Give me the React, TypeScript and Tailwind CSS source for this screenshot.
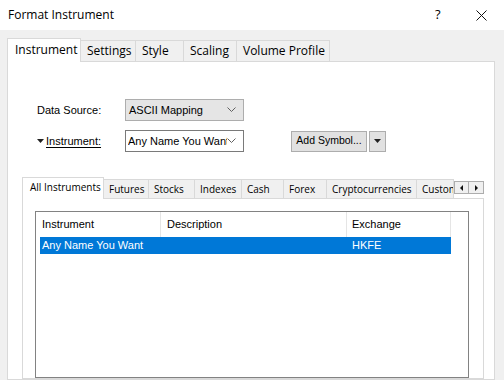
const ui = "font-['Open_Sans',sans-serif]";
const ms = "font-['Liberation_Sans',Arial,sans-serif]";

const Chevron = () => (
  <svg width="9" height="6" viewBox="0 0 9 6" className="shrink-0">
    <polyline points="0.5,0.5 4.5,4.5 8.5,0.5" fill="none" stroke="#606060" strokeWidth="1" />
  </svg>
);

const outerTabs = [
  { label: "Settings", w: "w-[55px]" },
  { label: "Style", w: "w-[48px]" },
  { label: "Scaling", w: "w-[53px]" },
  { label: "Volume Profile", w: "w-[93px]" },
];

const innerTabs = [
  { label: "Futures", w: "w-[45px]" },
  { label: "Stocks", w: "w-[46px]" },
  { label: "Indexes", w: "w-[47px]" },
  { label: "Cash", w: "w-[42px]" },
  { label: "Forex", w: "w-[43px]" },
  { label: "Cryptocurrencies", w: "w-[90px]" },
  { label: "Custom", w: "w-[37px]" },
];

export default function App() {
  return (
    <div className="flex h-[380px] w-[504px] flex-col overflow-hidden bg-[#f0f0f0] text-black">
      {/* title bar */}
      <div className={`flex h-[30px] shrink-0 items-center bg-white pl-[8px] text-[12px] ${ui}`}>
        <span className="flex-1">Format Instrument</span>
        <span className="w-[14px] text-[13px]">?</span>
        <span className="ml-[27px] mr-[17px] flex h-[11px] w-[11px] items-center">
          <svg width="11" height="11" viewBox="0 0 11 11">
            <path d="M0.5 0.5 L10.5 10.5 M10.5 0.5 L0.5 10.5" stroke="#111" strokeWidth="1" />
          </svg>
        </span>
      </div>

      <div className="flex min-h-0 flex-1 flex-col pl-[7px] pr-[9px] pt-[8px]">
        {/* outer tabs */}
        <div className={`relative z-10 flex h-[23px] shrink-0 items-end text-[12px] ${ui}`}>
          <div className="-mb-px flex h-[24px] w-[74px] items-center border border-b-0 border-[#d9d9d9] bg-white pl-[7px] pb-[2px]">
            Instrument
          </div>
          {outerTabs.map((t) => (
            <div
              key={t.label}
              className={`flex h-[21px] ${t.w} items-center border-t border-r border-[#d9d9d9] bg-[#f0f0f0] pl-[6px]`}
            >
              {t.label}
            </div>
          ))}
        </div>

        {/* outer panel */}
        <div className="flex min-h-0 flex-1 flex-col border border-[#d9d9d9] bg-white pt-[37px]">
          <div className={`flex h-[22px] items-center pl-[29px] text-[11px] ${ms}`}>
            <span className="w-[88px]">Data Source:</span>
            <div className="flex h-[22px] w-[119px] items-center justify-between border border-[#adadad] bg-[#e5e5e5] pl-[3px] pr-[7px]">
              <span>ASCII Mapping</span>
              <Chevron />
            </div>
          </div>

          <div className={`mt-[9px] flex h-[22px] items-center pl-[29px] text-[11px] ${ms}`}>
            <span className="flex w-[88px] items-center">
              <svg width="7" height="4" viewBox="0 0 7 4" className="mr-[2px]">
                <polygon points="0,0 7,0 3.5,4" fill="#222" />
              </svg>
              <span className="underline underline-offset-2">Instrument:</span>
            </span>
            <div className="flex h-[22px] w-[119px] items-center border border-[#7a7a7a] bg-white pl-[2px] pr-[7px]">
              <span className="w-[99px] overflow-hidden whitespace-nowrap">Any Name You Want</span>
              <span className="ml-auto">
                <Chevron />
              </span>
            </div>
            <div className="ml-[47px] flex h-[21px] w-[76px] items-center justify-center border border-[#adadad] bg-[#e1e1e1] text-[10.5px]">
              Add Symbol...
            </div>
            <div className="ml-[2px] flex h-[21px] w-[17px] items-center justify-center border border-[#adadad] bg-[#e1e1e1]">
              <svg width="7" height="4" viewBox="0 0 7 4">
                <polygon points="0,0 7,0 3.5,4" fill="#222" />
              </svg>
            </div>
          </div>

          {/* inner tab control */}
          <div className="ml-[14px] mr-[10px] mt-[26px] flex min-h-0 flex-1 flex-col">
            <div className={`relative z-10 flex h-[20px] shrink-0 items-end text-[10px] ${ui}`}>
              <div className="-mb-px flex h-[22px] w-[83px] items-center border border-b-0 border-[#d9d9d9] bg-white pl-[7px] pb-[2px]">
                All Instruments
              </div>
              {innerTabs.map((t) => (
                <div
                  key={t.label}
                  className={`flex h-[19px] ${t.w} shrink-0 items-center overflow-hidden whitespace-nowrap border-t border-r border-[#d9d9d9] bg-[#f0f0f0] pl-[5px]`}
                >
                  {t.label}
                </div>
              ))}
              <div className="mb-[4px] flex">
                <div className="flex h-[13px] w-[15px] items-center justify-center border border-[#adadad] bg-[#f0f0f0]">
                  <svg width="3" height="6" viewBox="0 0 3 6">
                    <polygon points="3,0 3,6 0,3" fill="#111" />
                  </svg>
                </div>
                <div className="flex h-[13px] w-[15px] items-center justify-center border border-l-0 border-[#adadad] bg-[#f0f0f0]">
                  <svg width="3" height="6" viewBox="0 0 3 6">
                    <polygon points="0,0 0,6 3,3" fill="#111" />
                  </svg>
                </div>
              </div>
            </div>

            <div className="flex min-h-0 flex-1 flex-col border border-[#d9d9d9] bg-white pl-[12px] pr-[14px] pt-[12px]">
              <div className={`flex flex-1 flex-col border border-[#828282] bg-white text-[11px] ${ms}`}>
                <div className="flex h-[25px] items-center">
                  <div className="flex h-full w-[125px] items-center border-r border-[#e5e5e5] pl-[6px]">Instrument</div>
                  <div className="flex h-full w-[186px] items-center border-r border-[#e5e5e5] pl-[6px]">Description</div>
                  <div className="flex h-full w-[104px] items-center border-r border-[#e5e5e5] pl-[5px]">Exchange</div>
                </div>
                <div className="ml-[4px] flex h-[17px] w-[411px] items-center bg-[#0078d7] text-white">
                  <span className="w-[307px] pl-[2px]">Any Name You Want</span>
                  <span className="pl-[5px]">HKFE</span>
                </div>
              </div>
            </div>
          </div>
        </div>
      </div>
    </div>
  );
}
